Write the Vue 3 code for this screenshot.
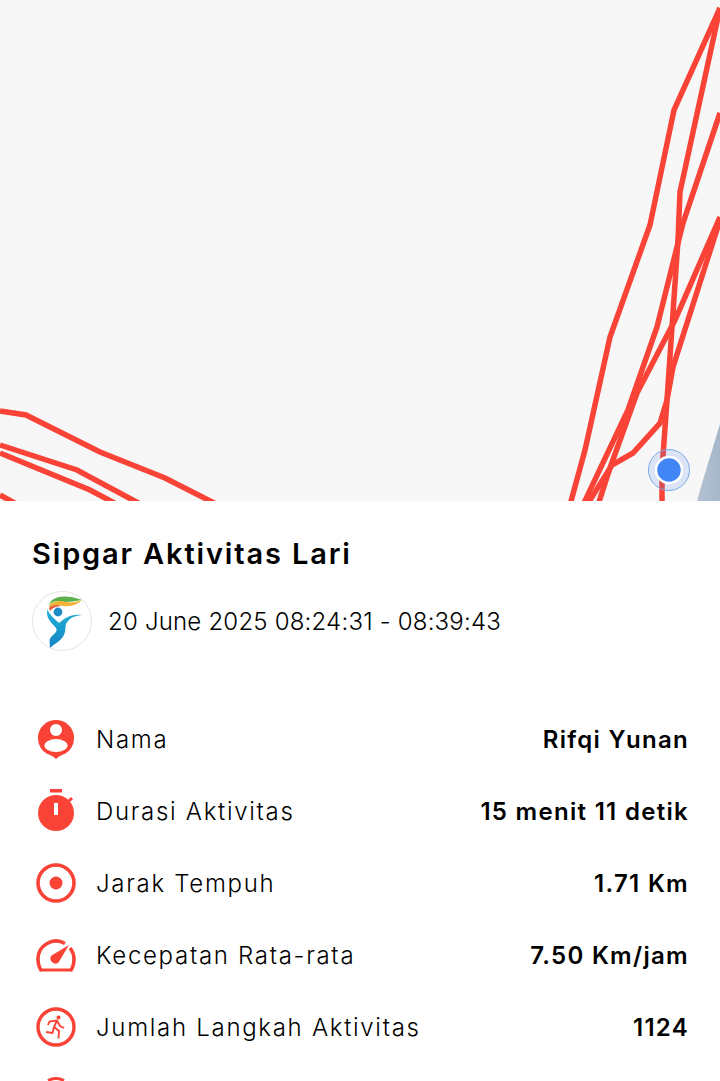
<template>
  <div class="page">

    <!-- map -->
    <div class="map">
      <svg class="map-svg" width="720" height="501" viewBox="0 0 720 501">
        <defs>
          <linearGradient id="ground" x1="0" y1="0" x2="1" y2="0">
            <stop offset="0" stop-color="#b4c2d2" />
            <stop offset="1" stop-color="#a6b7ca" />
          </linearGradient>
        </defs>
        <polygon points="697,501 703,480 720,424 720,501" fill="url(#ground)" />
        <polyline v-for="(pts, i) in routes" :key="i" :points="pts" class="route" />
        <circle cx="669" cy="470" r="20.5" fill="#4285f4" fill-opacity="0.16" stroke="#7fa9e6" stroke-width="1" />
        <circle cx="669" cy="470" r="13" fill="#4285f4" stroke="#fff" stroke-width="2.5" />
      </svg>
    </div>

    <!-- summary -->
    <section class="info">
      <h1 class="title">Sipgar Aktivitas Lari</h1>
      <div class="meta">
        <div class="logo">
          <svg width="60" height="60" viewBox="0 0 60 60">
            <defs>
              <linearGradient id="body" x1="0" y1="0" x2="0" y2="1">
                <stop offset="0" stop-color="#22b3d6" />
                <stop offset="1" stop-color="#1283c4" />
              </linearGradient>
            </defs>
            <circle cx="30" cy="30" r="29.5" fill="#fff" stroke="#e4e4e4" />
            <path d="M17 14 C20 5 33 3 50 9 C43 10 38 11 33 11 C27 9 20 10 17 14Z" fill="#5cb04a" />
            <path d="M17 15 C20 10 29 9 34 11 C39 12 44 11 50 9 C45 14 38 16 32 15 C26 13 20 14 17 17Z" fill="#f2b233" />
            <path d="M17 17 C20 14 25 13 30 15 C26 15 21 16 18 20Z" fill="#e4573f" />
            <circle cx="26" cy="21" r="4.4" fill="#1e8bc9" />
            <path d="M15.5 18 C17 24 24 29 27 32 C31 29 37 22 50 24 C40 25 37 28 34 33 C33 38 34 42 30 47 C27 51 22 53 18 57 L17.5 49 C19 44 27 41 24 37 C20 32 13 27 15.5 18Z" fill="url(#body)" />
          </svg>
        </div>
        <span class="date">20 June 2025 08:24:31 - 08:39:43</span>
      </div>

      <ul class="stats">
        <li v-for="s in stats" :key="s.label" class="stat">
          <span class="stat-icon">
            <svg v-if="s.icon === 'person'" width="40" height="40" viewBox="0 0 40 40">
              <path d="M20 1 A18 18 0 0 1 26 36 Q23 37 20 40 Q17 37 14 36 A18 18 0 0 1 20 1Z" fill="#f94336" />
              <circle cx="20" cy="11" r="6" fill="#fff" />
              <ellipse cx="20" cy="26.5" rx="11.5" ry="6.5" fill="#fff" />
            </svg>
            <svg v-else-if="s.icon === 'timer'" width="40" height="44" viewBox="0 0 40 44">
              <rect x="14" y="0" width="12" height="3.5" fill="#f94336" />
              <circle cx="20" cy="24" r="18" fill="#f94336" />
              <path d="M33 12 L36 9" stroke="#f94336" stroke-width="3" />
              <rect x="18" y="14" width="4" height="12" fill="#fff" />
            </svg>
            <svg v-else-if="s.icon === 'target'" width="40" height="40" viewBox="0 0 40 40">
              <circle cx="20" cy="20" r="18" fill="none" stroke="#f94336" stroke-width="3.6" />
              <circle cx="20" cy="20" r="6.5" fill="#f94336" />
            </svg>
            <svg v-else-if="s.icon === 'gauge'" width="40" height="40" viewBox="0 0 40 40">
              <path d="M5.5 36 Q2 31 2 24 A18 18 0 0 1 29 8.5 M34 13 Q38 18 38 24 Q38 31 34.5 36" fill="none" stroke="#f94336" stroke-width="3.6" />
              <path d="M4 33.5 H36 L35 36.5 H5Z" fill="#f94336" />
              <path d="M15.5 20.5 L33 10 L22.5 27.5 A5 5 0 0 1 15.5 20.5Z" fill="#f94336" />
            </svg>
            <svg v-else width="40" height="40" viewBox="0 0 40 40">
              <circle cx="20" cy="20" r="18" fill="none" stroke="#f94336" stroke-width="3.4" />
              <circle cx="22.5" cy="10.5" r="2" fill="#f94336" />
              <path d="M12 18 L13.5 14.5 L21 13.5 L24 19 L28 21 M21 13.5 L18 20 L23 24 L22.5 31.5 M18 20 L16.5 26 L10 25" fill="none" stroke="#f94336" stroke-width="1.9" />
            </svg>
          </span>
          <span class="stat-label">{{ s.label }}</span>
          <span class="stat-value">{{ s.value }}</span>
        </li>
      </ul>
    </section>

    <!-- next row, cut off by the viewport -->
    <svg class="cut-icon" width="40" height="4" viewBox="0 0 40 4">
      <path d="M12 3.5 Q20 -0.5 28 3.5" fill="none" stroke="#f94336" stroke-width="3" />
    </svg>
  </div>
</template>

<script setup>
const routes = [
  '720,8 674,110 650,225 610,337 585,450 570,505',
  '720,8 680,192 678,240 667,400 662,470 662,505',
  '720,113 683,223 657,327 628,410 583,505',
  '720,217 675,320 637,393 610,468 598,505',
  '720,220 673,367 667,400 660,423 633,453 612,465 587,505',
  '0,411 26,415 100,452 165,478 218,505',
  '0,445 77,470 142,505',
  '0,453 90,490 118,505',
  '0,495 18,505'
]

const stats = [
  { icon: 'person', label: 'Nama', value: 'Rifqi Yunan' },
  { icon: 'timer', label: 'Durasi Aktivitas', value: '15 menit 11 detik' },
  { icon: 'target', label: 'Jarak Tempuh', value: '1.71 Km' },
  { icon: 'gauge', label: 'Kecepatan Rata-rata', value: '7.50 Km/jam' },
  { icon: 'run', label: 'Jumlah Langkah Aktivitas', value: '1124' }
]
</script>

<style scoped>
.page {
  position: relative;
  width: 720px;
  height: 1081px;
  overflow: hidden;
  background: #fff;
  font-family: Inter, 'Open Sans', Arial, sans-serif;
  color: #000;
}

.map {
  position: relative;
  height: 501px;
  background: #f7f7f7;
  overflow: hidden;
}

.map-svg { display: block; }

.route {
  fill: none;
  stroke: #f94336;
  stroke-width: 5.5;
  stroke-linejoin: miter;
  filter: blur(0.4px);
}

.info { padding: 35px 32px 0; }

.title {
  margin: 0;
  font-size: 29px;
  line-height: 36px;
  font-weight: 600;
  letter-spacing: 1.85px;
}

.meta {
  display: flex;
  align-items: center;
  gap: 16px;
  margin-top: 19px;
}

.logo { width: 60px; height: 60px; }
.logo svg { display: block; }

.date {
  font-size: 24px;
  font-weight: 300;
  letter-spacing: 0.2px;
}

.stats {
  list-style: none;
  margin: 52px 0 0;
  padding: 0;
}

.stat {
  display: flex;
  align-items: center;
  height: 72px;
}

.stat-icon {
  width: 48px;
  margin-right: 16px;
  display: flex;
  justify-content: flex-start;
  flex-shrink: 0;
}

.stat-icon svg { display: block; margin-left: 4px; }

.stat-label {
  flex: 1;
  font-size: 24px;
  font-weight: 300;
  letter-spacing: 1.7px;
}

.stat-value {
  font-size: 24px;
  font-weight: 600;
  letter-spacing: 1.3px;
  margin-right: -1px;
}

.cut-icon {
  position: absolute;
  left: 36px;
  bottom: 0;
  display: block;
}
</style>
